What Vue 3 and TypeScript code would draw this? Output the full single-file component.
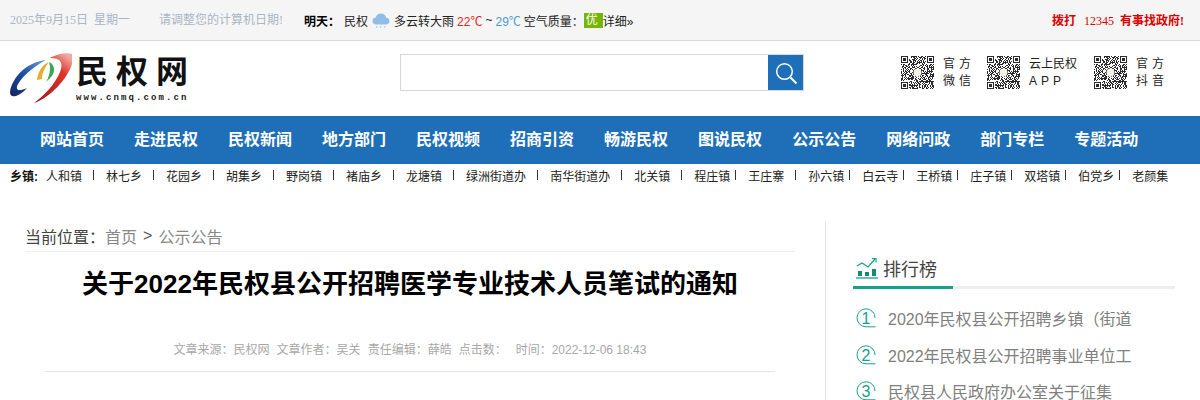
<script setup lang="ts">
interface Town {
  name: string
  tight?: boolean
}

const towns: Town[] = [
  { name: '人和镇' },
  { name: '林七乡' },
  { name: '花园乡' },
  { name: '胡集乡' },
  { name: '野岗镇' },
  { name: '褚庙乡' },
  { name: '龙塘镇' },
  { name: '绿洲街道办' },
  { name: '南华街道办' },
  { name: '北关镇' },
  { name: '程庄镇' },
  { name: '王庄寨', tight: true },
  { name: '孙六镇' },
  { name: '白云寺', tight: true },
  { name: '王桥镇', tight: true },
  { name: '庄子镇', tight: true },
  { name: '双塔镇', tight: true },
  { name: '伯党乡', tight: true },
  { name: '老颜集', tight: true },
]

const navItems = [
  '网站首页', '走进民权', '民权新闻', '地方部门', '民权视频', '招商引资',
  '畅游民权', '图说民权', '公示公告', '网络问政', '部门专栏', '专题活动',
]

const qrCodes = [
  { id: 'wx', lines: ['官方', '微信'], cls: 'wide' },
  { id: 'app', lines: ['云上民权', 'APP'], cls: 'app' },
  { id: 'dy', lines: ['官方', '抖音'], cls: 'wide' },
]

const ranks = [
  '2020年民权县公开招聘乡镇（街道',
  '2022年民权县公开招聘事业单位工',
  '民权县人民政府办公室关于征集',
]

// qr modules, seeded so the picture stays the same on every run
const qrSize = 33
function inFinder(x: number, y: number, ox: number, oy: number) {
  return x >= ox && x < ox + 8 && y >= oy && y < oy + 8
}
function finderOn(x: number, y: number) {
  if (x === 0 || y === 0 || x === 6 || y === 6) return x >= 0 && y >= 0 && x <= 6 && y <= 6
  if (x >= 2 && x <= 4 && y >= 2 && y <= 4) return true
  return false
}
function buildQr(seed: number) {
  let s = seed
  const next = () => {
    s = (s * 1103515245 + 12345) & 0x7fffffff
    return (s >> 12) & 1
  }
  const mods: string[] = []
  for (let y = 0; y < qrSize; y++) {
    for (let x = 0; x < qrSize; x++) {
      let on = next() === 1
      if (inFinder(x, y, 0, 0)) on = finderOn(x, y)
      else if (inFinder(x, y, qrSize - 8, 0)) on = finderOn(x - (qrSize - 7), y)
      else if (inFinder(x, y, 0, qrSize - 8)) on = finderOn(x, y - (qrSize - 7))
      if (on) mods.push(`M${x} ${y}h1v1h-1z`)
    }
  }
  return mods.join('')
}
const qrPath = buildQr(20221206)
</script>

<template>
  <div class="page">
    <div class="topbar">
      <div class="top-left">
        <span class="date">2025年9月15日</span>
        <span class="week">星期一</span>
        <span class="tip">请调整您的计算机日期!</span>
      </div>
      <div class="weather">
        <b class="tomorrow">明天：</b>
        <span class="city">民权</span>
        <svg class="cloud" width="18" height="17" viewBox="0 0 18 17">
          <path d="M4.5 12.5C2 12.5 .5 11 .5 9s1.500-3.400 3.300-3.400C4.400 3 6.500 1.500 9 1.500c2.800 0 4.800 1.800 5.200 4.200 2 .2 3.300 1.600 3.300 3.400 0 2-1.500 3.400-3.700 3.400z" fill="#8fbde6" />
          <path d="M5 14l-.5 2M9 14l-.5 2M13 14l-.5 2" stroke="#a9c9e8" stroke-width="1" />
        </svg>
        <span class="desc">多云转大雨</span>
        <span class="low">22℃</span>
        <span class="sep">~</span>
        <span class="high">29℃</span>
        <span class="air">空气质量：</span>
        <span class="air-tag">优</span>
        <span class="more">详细»</span>
      </div>
      <div class="hotline">拨打<span class="hot-num">12345</span>有事找政府!</div>
    </div>

    <div class="header">
      <div class="logo">
        <svg class="logo-mark" width="66" height="62" viewBox="10 45 66 62">
          <defs>
            <linearGradient id="redGrad" x1="0.8" y1="0" x2="0.2" y2="1">
              <stop offset="0" stop-color="#f2a9a4" />
              <stop offset="0.3" stop-color="#e0352b" />
              <stop offset="1" stop-color="#a81a16" />
            </linearGradient>
            <linearGradient id="blueGrad" x1="1" y1="0" x2="0" y2="1">
              <stop offset="0" stop-color="#6aa5dc" />
              <stop offset="0.5" stop-color="#1d4fa3" />
              <stop offset="1" stop-color="#14245e" />
            </linearGradient>
          </defs>
          <path d="M10 92C12 78 26 62 46 60 38 64 24 74 18 84 15 90 18 92 27 88 20 96 10 100 10 92z" fill="url(#blueGrad)" />
          <path d="M37 80C38 71 42 65 49 62 45 67 42 73 42 79z" fill="#e3b02c" />
          <path d="M46 82C50 75 51 68 49 62 55 64 56 73 50 78z" fill="#3aa552" />
          <path d="M72 54C65 52 55 55 50 58 60 58 64 62 60 72 55 84 45 95 34 103 50 98 68 78 72 64z" fill="url(#redGrad)" />
        </svg>
        <div class="logo-text">
          <div class="logo-name"><span>民</span><span>权</span><span>网</span></div>
          <div class="logo-url">www.cnmq.com.cn</div>
        </div>
      </div>

      <div class="search">
        <div class="search-input"></div>
        <div class="search-btn">
          <svg width="24" height="24" viewBox="0 0 24 24" fill="none" stroke="#fff">
            <circle cx="10.500" cy="10.500" r="7.800" stroke-width="1.500" />
            <path d="M16.500 16.500l6 6" stroke-width="2" />
          </svg>
        </div>
      </div>

      <div class="qr-list">
        <div v-for="qr in qrCodes" :key="qr.id" class="qr-item" :class="qr.cls">
          <svg class="qr" width="33" height="33" :viewBox="`0 0 ${qrSize} ${qrSize}`">
            <path :d="qrPath" fill="#2b2b2b" />
            <circle cx="16.500" cy="16.500" r="4" fill="#f4f1e6" />
          </svg>
          <div class="qr-label">
            <div v-for="line in qr.lines" :key="line">{{ line }}</div>
          </div>
        </div>
      </div>
    </div>

    <div class="nav">
      <a v-for="item in navItems" :key="item" class="nav-item">{{ item }}</a>
    </div>

    <div class="towns">
      <b class="towns-title">乡镇:</b>
      <template v-for="(town, i) in towns" :key="town.name">
        <i v-if="i > 0" class="town-sep" :class="{ tight: town.tight }"></i>
        <span class="town">{{ town.name }}</span>
      </template>
    </div>

    <div class="main">
      <div class="article">
        <div class="crumb">
          <span class="crumb-label">当前位置：</span>
          <span>首页</span>
          <span class="crumb-arrow">&gt;</span>
          <span>公示公告</span>
        </div>
        <h1 class="title">关于2022年民权县公开招聘医学专业技术人员笔试的通知</h1>
        <div class="meta">
          <span>文章来源：民权网</span>
          <span>文章作者：吴关</span>
          <span>责任编辑：薛皓</span>
          <span>点击数：</span>
          <span class="meta-time">时间：2022-12-06 18:43</span>
        </div>
      </div>

      <div class="side">
        <div class="side-head">
          <svg width="24" height="22" viewBox="0 0 24 22" fill="none">
            <path d="M2 9l5-3 6 4 7-8" stroke="#17a08c" stroke-width="1.200" />
            <path d="M17 1.500h4v4" stroke="#17a08c" stroke-width="1.200" />
            <path d="M3 14h4v5H3zM10 15h4v4h-4zM17 12h4v7h-4z" fill="#128a78" />
            <path d="M1 21h22" stroke="#17a08c" stroke-width="1.300" />
          </svg>
          <span class="side-title">排行榜</span>
        </div>
        <div class="side-bar"><div class="side-bar-on"></div></div>
        <div class="rank-list">
          <div v-for="(rank, i) in ranks" :key="rank" class="rank-item">
            <svg class="rank-num" width="20" height="20" viewBox="0 0 20 20" fill="none">
              <path d="M19.500 18.800h-9.500a9 9 0 1 1 9-8.800" stroke="#17a08c" stroke-width="1" />
              <text x="10" y="15.500" text-anchor="middle" font-size="16" fill="#17a08c">{{ i + 1 }}</text>
            </svg>
            <span class="rank-text">{{ rank }}</span>
          </div>
        </div>
      </div>
    </div>
  </div>
</template>

<style>
html,
body {
  margin: 0;
  background: #fff;
  overflow: hidden;
}
</style>

<style scoped>
.page {
  width: 1200px;
  height: 400px;
  overflow: hidden;
  font-family: "Liberation Sans", "Noto Sans CJK SC", sans-serif;
  color: #222;
}

.topbar {
  display: flex;
  align-items: center;
  height: 40px;
  background: #f5f5f5;
  border-bottom: 1px solid #d9d9d9;
  font-size: 12px;
  padding-left: 10px;
  padding-right: 16px;
}

.top-left {
  display: flex;
  color: #a9b6c6;
  font-family: "Liberation Serif", "Noto Sans CJK SC", serif;
  margin-top: -2px;
}

.week {
  margin-left: 6px;
}

.tip {
  margin-left: 29px;
}

.weather {
  display: flex;
  align-items: center;
  margin-left: 21px;
  color: #222;
}

.tomorrow {
  color: #000;
}

.city {
  margin-left: 4px;
}

.cloud {
  margin: 0 4px 0 4px;
}

.low {
  color: #ee1c25;
  margin-left: 3px;
}

.sep {
  margin: 0 3px;
}

.high {
  color: #4d9bcf;
}

.air {
  margin-left: 3px;
}

.air-tag {
  background: #76b500;
  color: #fff;
  width: 19px;
  height: 15px;
  line-height: 15px;
  padding-left: 2px;
  box-sizing: border-box;
}

.hotline {
  margin-left: auto;
  color: #dd0000;
  font-weight: 700;
  font-family: "Liberation Serif", "Noto Sans CJK SC", serif;
  margin-top: -1px;
  white-space: pre;
}

.hot-num {
  font-weight: 400;
  margin: 0 6px 0 8px;
}

.header {
  display: flex;
  height: 75px;
}

.logo {
  display: flex;
  margin-left: 10px;
  width: 180px;
  flex: none;
}

.logo-mark {
  margin-top: 4px;
  flex: none;
}

.logo-name {
  display: flex;
  justify-content: space-between;
  width: 112px;
  font-size: 32px;
  line-height: 40px;
  font-weight: 700;
  color: #111;
  margin-top: 11px;
}

.logo-url {
  font-family: "Liberation Mono", monospace;
  font-size: 9px;
  font-weight: 700;
  letter-spacing: 2.100px;
  line-height: 11px;
  color: #222;
  white-space: nowrap;
  margin-top: 1px;
}

.search {
  display: flex;
  flex: none;
  width: 404px;
  height: 37px;
  margin-left: 210px;
  margin-top: 13px;
  box-sizing: border-box;
  border: 1px solid #d8d8d8;
}

.search-input {
  flex: 1;
}

.search-btn {
  display: flex;
  align-items: center;
  justify-content: center;
  width: 35px;
  background: #1e6fb8;
}

.qr-list {
  display: flex;
  margin-left: 97px;
  margin-top: 15px;
}

.qr-item {
  display: flex;
  width: 86px;
}

.qr-item.app {
  width: 107px;
}

.qr {
  flex: none;
}

.qr-label {
  margin-left: 9px;
  font-size: 12px;
  line-height: 17px;
  color: #222;
  letter-spacing: 0;
  white-space: nowrap;
}

.qr-item.wide .qr-label {
  letter-spacing: 4px;
}

.qr-item.app .qr-label {
  margin-left: 9px;
}

.qr-item.app .qr-label div:last-child {
  letter-spacing: 4px;
}

.nav {
  display: flex;
  gap: 30px;
  height: 48px;
  padding-left: 40px;
  background: #1e6fb8;
}

.nav-item {
  font-size: 16px;
  font-weight: 700;
  line-height: 48px;
  color: #fff;
  white-space: nowrap;
}

.towns {
  display: flex;
  align-items: center;
  height: 22px;
  padding-left: 10px;
  font-size: 12px;
  color: #222;
  white-space: nowrap;
}

.towns-title {
  width: 36px;
  color: #111;
  flex: none;
}

.town-sep {
  display: block;
  width: 1px;
  height: 10px;
  background: #333;
  margin: 0 12px 0 11px;
}

.town-sep.tight {
  margin-left: 5px;
}

.main {
  display: flex;
  margin-top: 35px;
}

.article {
  flex: none;
  width: 770px;
  margin-left: 25px;
}

.crumb {
  display: flex;
  align-items: center;
  height: 31px;
  box-sizing: border-box;
  border-bottom: 1px solid #eee;
  font-size: 16px;
  color: #888;
}

.crumb-label {
  color: #444;
  margin-right: 0;
}

.crumb-arrow {
  color: #555;
  margin: 0 6px;
}

.title {
  margin: 12px 0 0;
  font-size: 26px;
  line-height: 40px;
  font-weight: 700;
  text-align: center;
  color: #000;
  white-space: nowrap;
}

.meta {
  display: flex;
  justify-content: center;
  gap: 7px;
  margin: 33px 20px 0;
  padding: 7px 0 19px;
  height: 8px;
  line-height: 12px;
  font-size: 12px;
  color: #a8a8a8;
  border-bottom: 1px solid #e6e6e6;
  white-space: nowrap;
}

.meta-time {
  margin-left: 2px;
}

.side {
  flex: none;
  width: 322px;
  height: 200px;
  margin-left: 30px;
  padding-left: 27px;
  padding-top: 34px;
  border-left: 1px solid #e6e6e6;
}

.side-head {
  display: flex;
  align-items: center;
  height: 26px;
  padding-left: 2px;
  gap: 4px;
}

.side-title {
  font-size: 18px;
  color: #444;
}

.side-bar {
  height: 3px;
  margin-top: 5px;
  background: #eeeeee;
}

.side-bar-on {
  width: 100px;
  height: 3px;
  background: #17a08c;
}

.rank-list {
  margin-top: 11px;
}

.rank-item {
  display: flex;
  align-items: center;
  height: 36.400px;
  padding-left: 3px;
}

.rank-num {
  flex: none;
}

.rank-text {
  margin-left: 12px;
  font-size: 16px;
  color: #808080;
  white-space: nowrap;
}
</style>
